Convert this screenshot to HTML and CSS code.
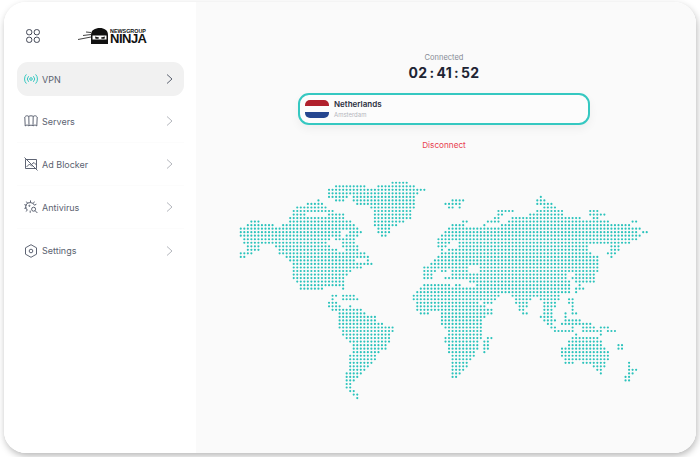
FILE: index.html
```html
<!DOCTYPE html>
<html lang="en">
  <head>
    <meta charset="UTF-8">
    <meta name="viewport" content="width=device-width, initial-scale=1.0">
    <title>Newsgroup Ninja VPN</title>
    <link rel="stylesheet" href="styles.css">
  </head>

  <body>
    <div class="frame">

      <aside class="sidebar">
        <div class="top">
          <svg class="apps" viewBox="0 0 14 14">
            <rect x="0.6" y="0.6" width="5.2" height="5.2" rx="2.2"/>
            <rect x="8.2" y="0.6" width="5.2" height="5.2" rx="2.2"/>
            <rect x="0.6" y="8.2" width="5.2" height="5.2" rx="2.2"/>
            <rect x="8.2" y="8.2" width="5.2" height="5.2" rx="2.2"/>
          </svg>
          <div class="logo">
            <svg class="ninja-head" viewBox="0 0 31 16">
              <path class="streak" d="M0 11.5 L13 9 M5 7.5 L13 6.5 M8 4 L13 4.5"/>
              <path d="M13 16 V7 C13 2 17 0 22 0 C26 0 30 2 30 7 V16 Z"/>
              <path class="mask" d="M14.5 7.5 H28.5 V11.5 H14.5 Z"/>
              <path d="M17 8.5 L21 9.5 L20.5 10.8 H17.5 Z M27 8.5 L23 9.5 L23.5 10.8 H26.5 Z"/>
            </svg>
            <div class="logo-text">
              <span class="logo-small">NEWSGROUP</span>
              <span class="logo-big">NINJA</span>
            </div>
          </div>
        </div>

        <nav class="menu">
          <a class="item active">
            <svg class="icon teal" viewBox="0 0 14 14">
              <circle cx="7" cy="7" r="1.3"/>
              <path d="M4.6 4.2 A4 4 0 0 0 4.6 9.8 M9.4 4.2 A4 4 0 0 1 9.4 9.8"/>
              <path d="M2.4 2.4 A6.6 6.6 0 0 0 2.4 11.6 M11.6 2.4 A6.6 6.6 0 0 1 11.6 11.6"/>
            </svg>
            <span>VPN</span>
            <svg class="chev" viewBox="0 0 7 10"><path d="M1 0.5 L6 5 L1 9.5"/></svg>
          </a>
          <a class="item">
            <svg class="icon" viewBox="0 0 14 14">
              <path d="M0.8 3 C1.8 1.6 3.4 1.4 4.8 2.4 C6 1.6 8 1.6 9.2 2.4 C10.6 1.4 12.2 1.6 13.2 3 L12.8 12 C11.8 10.8 10.4 10.8 9.2 11.8 C8 11 6 11 4.8 11.8 C3.6 10.8 2.2 10.8 1.2 12 Z"/>
              <path d="M4.8 2.4 L5 11.8 M9.2 2.4 L9 11.8"/>
            </svg>
            <span>Servers</span>
            <svg class="chev" viewBox="0 0 7 10"><path d="M1 0.5 L6 5 L1 9.5"/></svg>
          </a>
          <a class="item">
            <svg class="icon" viewBox="0 0 14 14">
              <path d="M2.5 2.5 H12.5 V11.5 H1.5 V2.5 Z"/>
              <path d="M0.5 0.5 L13.5 13.5"/>
              <path d="M2.5 10 L5.5 7 L8 9.5 M8 7 L10 5.5 L12.5 8"/>
            </svg>
            <span>Ad Blocker</span>
            <svg class="chev" viewBox="0 0 7 10"><path d="M1 0.5 L6 5 L1 9.5"/></svg>
          </a>
          <a class="item">
            <svg class="icon" viewBox="0 0 14 14">
              <path d="M6.5 2.6 A4.2 4.2 0 0 0 3.4 10.2 M6.5 2.6 A4.2 4.2 0 0 1 10.4 5.2"/>
              <path d="M6.5 0.4 V2.6 M2.4 1.6 L3.6 3.4 M10.4 1.6 L9.4 3.4 M0.4 4.6 L2.6 5.4 M0.4 8.4 L2.6 7.8 M1.8 11.4 L3.4 10.2 M12.4 4.2 L10.4 5.2 M6.2 10.6 V12.8"/>
              <circle cx="9.6" cy="9.2" r="2"/>
              <path d="M11 10.6 L13.4 13"/>
              <circle cx="5.4" cy="5.8" r="0.6"/>
            </svg>
            <span>Antivirus</span>
            <svg class="chev" viewBox="0 0 7 10"><path d="M1 0.5 L6 5 L1 9.5"/></svg>
          </a>
          <a class="item last">
            <svg class="icon" viewBox="0 0 14 14">
              <path d="M7 0.7 L12.5 3.8 V10.2 L7 13.3 L1.5 10.2 V3.8 Z"/>
              <circle cx="7" cy="7" r="1.8"/>
            </svg>
            <span>Settings</span>
            <svg class="chev" viewBox="0 0 7 10"><path d="M1 0.5 L6 5 L1 9.5"/></svg>
          </a>
        </nav>
      </aside>

      <main class="main">
        <p class="status">Connected</p>
        <p class="timer">02 : 41 : 52</p>

        <div class="location">
          <div class="flag"><i class="red"></i><i class="white"></i><i class="blue"></i></div>
          <div>
            <p class="country">Netherlands</p>
            <p class="city">Amsterdam</p>
          </div>
        </div>

        <a class="disconnect">Disconnect</a>

        <!-- one subpath per run of dots, x = column, y = row of the dot grid -->
        <svg class="map" viewBox="-0.5 -0.5 116 63">
          <path d="
            M43 0H47.01
            M27 1H35.01M39 1H49.01
            M25 2H52.01
            M25 3H50.01
            M25 4H30.01M32 4H49.01M85 4H85.01
            M22 5H22.01M27 5H29.01M32 5H49.01M60 5H63.01M84 5H86.01
            M19 6H23.01M33 6H49.01M58 6H62.01M84 6H88.01
            M16 7H24.01M37 7H49.01M59 7H60.01M62 7H62.01M86 7H89.01
            M15 8H26.01M38 8H48.01M73 8H77.01M84 8H91.01M99 8H101.01
            M15 9H18.01M25 9H29.01M38 9H48.01M73 9H74.01M82 9H91.01M99 9H103.01
            M14 10H29.01M38 10H48.01M72 10H73.01M77 10H96.01M100 10H101.01
            M3 11H5.01M14 11H31.01M38 11H46.01M63 11H64.01M70 11H73.01M76 11H104.01M111 11H112.01
            M2 12H9.01M12 12H32.01M38 12H44.01M60 12H63.01M69 12H69.01M74 12H110.01
            M0 13H33.01M39 13H42.01M59 13H113.01
            M0 14H28.01M31 14H34.01M39 14H42.01M58 14H112.01M114 14H115.01
            M0 15H28.01M30 15H33.01M40 15H41.01M57 15H112.01M113 15H113.01
            M1 16H25.01M27 16H32.01M56 16H59.01M60 16H112.01
            M1 17H24.01M29 17H32.01M56 17H59.01M62 17H110.01
            M2 18H5.01M10 18H25.01M29 18H33.01M56 18H58.01M62 18H98.01M105 18H107.01
            M2 19H5.01M11 19H27.01M30 19H33.01M57 19H57.01M59 19H59.01M60 19H98.01M105 19H107.01
            M0 20H3.01M11 20H35.01M57 20H99.01M104 20H106.01
            M0 21H1.01M13 21H36.01M56 21H101.01M105 21H105.01
            M14 22H32.01M36 22H36.01M55 22H101.01
            M15 23H37.01M54 23H101.01
            M15 24H34.01M52 24H64.01M68 24H101.01
            M15 25H31.01M52 25H55.01M57 25H58.01M60 25H64.01M68 25H101.01
            M15 26H30.01M52 26H54.01M60 26H92.01M95 26H100.01
            M15 27H29.01M52 27H54.01M58 27H92.01M94 27H100.01
            M16 28H29.01M65 28H93.01M95 28H100.01
            M17 29H29.01M52 29H59.01M61 29H62.01M67 29H93.01M96 29H96.01
            M17 30H23.01M29 30H29.01M51 30H70.01M71 30H93.01M95 30H97.01
            M50 31H65.01M66 31H93.01M95 31H95.01
            M26 32H27.01M29 32H32.01M49 32H73.01M77 32H90.01
            M26 33H26.01M29 33H33.01M49 33H72.01M78 33H82.01M85 33H90.01M93 33H94.01
            M25 34H27.01M50 34H67.01M69 34H71.01M78 34H81.01M86 34H89.01M93 34H94.01
            M25 35H28.01M31 35H31.01M50 35H69.01M79 35H81.01M86 35H89.01M94 35H94.01
            M26 36H34.01M50 36H71.01M79 36H80.01M86 36H88.01M94 36H94.01
            M28 37H35.01M51 37H53.01M57 37H71.01M80 37H81.01M86 37H88.01M92 37H92.01M94 37H95.01
            M28 38H38.01M57 38H69.01M85 38H88.01M92 38H92.01
            M28 39H38.01M57 39H68.01M86 39H89.01M92 39H96.01
            M28 40H40.01M57 40H68.01M87 40H88.01M91 40H95.01M96 40H99.01
            M28 41H43.01M58 41H68.01M88 41H89.01M94 41H94.01M97 41H100.01M102 41H104.01
            M29 42H43.01M59 42H68.01M89 42H94.01M97 42H102.01M104 42H106.01
            M29 43H42.01M59 43H68.01M95 43H95.01M102 43H102.01
            M30 44H42.01M58 44H68.01M70 44H71.01M94 44H101.01
            M31 45H42.01M58 45H67.01M69 45H70.01M93 45H102.01
            M32 46H41.01M59 46H67.01M69 46H70.01M93 46H102.01M107 46H108.01
            M32 47H41.01M59 47H67.01M69 47H70.01M91 47H103.01M107 47H108.01
            M32 48H39.01M59 48H66.01M69 48H69.01M91 48H104.01
            M31 49H38.01M60 49H66.01M91 49H104.01
            M31 50H38.01M60 50H65.01M92 50H104.01
            M31 51H37.01M60 51H64.01M92 51H94.01M97 51H103.01M110 51H110.01
            M31 52H36.01M60 52H64.01M100 52H103.01M110 52H110.01
            M31 53H35.01M60 53H63.01M101 53H102.01M110 53H112.01
            M30 54H34.01M60 54H62.01M102 54H102.01M110 54H111.01
            M30 55H33.01M60 55H61.01M109 55H110.01
            M30 56H32.01M109 56H110.01
            M30 57H31.01
            M30 58H31.01
            M31 59H32.01
            M32 60H33.01
            M33 61H33.01
          "/>
        </svg>
      </main>

    </div>
  </body>
</html>
```

FILE: styles.css
```css
* {
  box-sizing: border-box;
}

html, body {
  height: 100%;
}

body {
  margin: 0;
  padding: 2px 4px 4px 4px;
  background-color: white;
  font-family: "Inter", "Liberation Sans", sans-serif;
  overflow: hidden;
}

p {
  margin: 0;
}

.frame {
  display: flex;
  height: 451px;
  border-radius: 22px;
  overflow: hidden;
  background-color: white;
}

body::before {
  content: "";
  position: absolute;
  top: 2px;
  left: 4px;
  width: 692px;
  height: 451px;
  border-radius: 22px;
  box-shadow: 1px 3px 7px rgba(0, 0, 0, .28);
  z-index: -1;
}

.sidebar {
  width: 192px;
  padding: 0 12px 0 13px;
  background-color: white;
}

.top {
  display: flex;
  align-items: center;
  height: 58px;
  padding-left: 9px;
  padding-top: 10px;
}

.apps {
  width: 14px;
  height: 14px;
  fill: none;
  stroke: #3c4150;
  stroke-width: 1;
}

.logo {
  display: flex;
  align-items: flex-end;
  margin-left: 38px;
}

.ninja-head {
  width: 31px;
  height: 16px;
  fill: #111;
}

.ninja-head .streak {
  fill: none;
  stroke: #111;
  stroke-width: .8;
}

.ninja-head .mask {
  fill: white;
}

.logo-text {
  display: flex;
  flex-direction: column;
  margin-left: 1px;
  font-family: "Liberation Sans", sans-serif;
  font-weight: bold;
  color: #111;
  line-height: 1;
}

.logo-small {
  font-size: 5.4px;
  height: 6px;
  line-height: 6px;
}

.logo-big {
  font-size: 13px;
  height: 10px;
  line-height: 10px;
  letter-spacing: -.5px;
}

.menu {
  display: flex;
  flex-direction: column;
  margin-top: 2px;
}

.item {
  display: flex;
  align-items: center;
  height: 43px;
  padding: 0 11px 0 7px;
  border-bottom: 1px solid #fcfcfc;
  font-size: 9px;
  color: #5b6270;
}

.item span {
  flex: 1;
  margin-left: 4px;
}

.item.active {
  height: 34px;
  margin-bottom: 4px;
  border-bottom: none;
  border-radius: 11px;
  background-color: #f1f1f1;
}

.item.last {
  border-bottom: none;
}

.icon {
  width: 14px;
  height: 14px;
  fill: none;
  stroke: #4d5464;
  stroke-width: .9;
}

.icon.teal {
  stroke: #35c8c1;
  stroke-width: 1;
}

.chev {
  width: 7px;
  height: 10px;
  fill: none;
  stroke: #b4b7bd;
  stroke-width: 1;
}

.active .chev {
  stroke: #5b6270;
}

.main {
  flex: 1;
  display: flex;
  flex-direction: column;
  align-items: center;
  padding: 51px 4px 0 0;
  background-color: #fafafa;
}

.status {
  font-size: 7.5px;
  line-height: 10px;
  color: #858a94;
}

.timer {
  margin-top: 1px;
  font-size: 14px;
  line-height: 18px;
  font-weight: 700;
  letter-spacing: .3px;
  word-spacing: -1.6px;
  color: #1e2433;
}

.location {
  display: flex;
  align-items: center;
  gap: 5px;
  width: 292px;
  height: 32px;
  margin-top: 11px;
  padding-left: 5px;
  border: 2px solid #35c8c1;
  border-radius: 11px;
  background-color: #fcfcfc;
  box-shadow: 0 4px 10px rgba(0, 0, 0, .05);
}

.flag {
  display: flex;
  flex-direction: column;
  width: 24px;
  height: 18px;
  border-radius: 5px;
  overflow: hidden;
}

.flag i {
  flex: 1;
}

.red { background-color: #b0202c; }
.white { background-color: #fcfcfc; }
.blue { background-color: #25468f; }

.country {
  font-size: 8px;
  line-height: 11px;
  font-weight: 600;
  color: #2a2f3e;
}

.city {
  font-size: 6px;
  line-height: 9px;
  color: #b4b6bc;
}

.disconnect {
  margin-top: 15px;
  font-size: 8.2px;
  line-height: 11px;
  color: #e8404f;
}

.map {
  display: block;
  width: 409.5px;
  height: 222.4px;
  margin-top: 30px;
  fill: none;
  stroke: #2cc3bc;
  stroke-width: .62;
  stroke-linecap: round;
  stroke-dasharray: 0 1;
}
```
